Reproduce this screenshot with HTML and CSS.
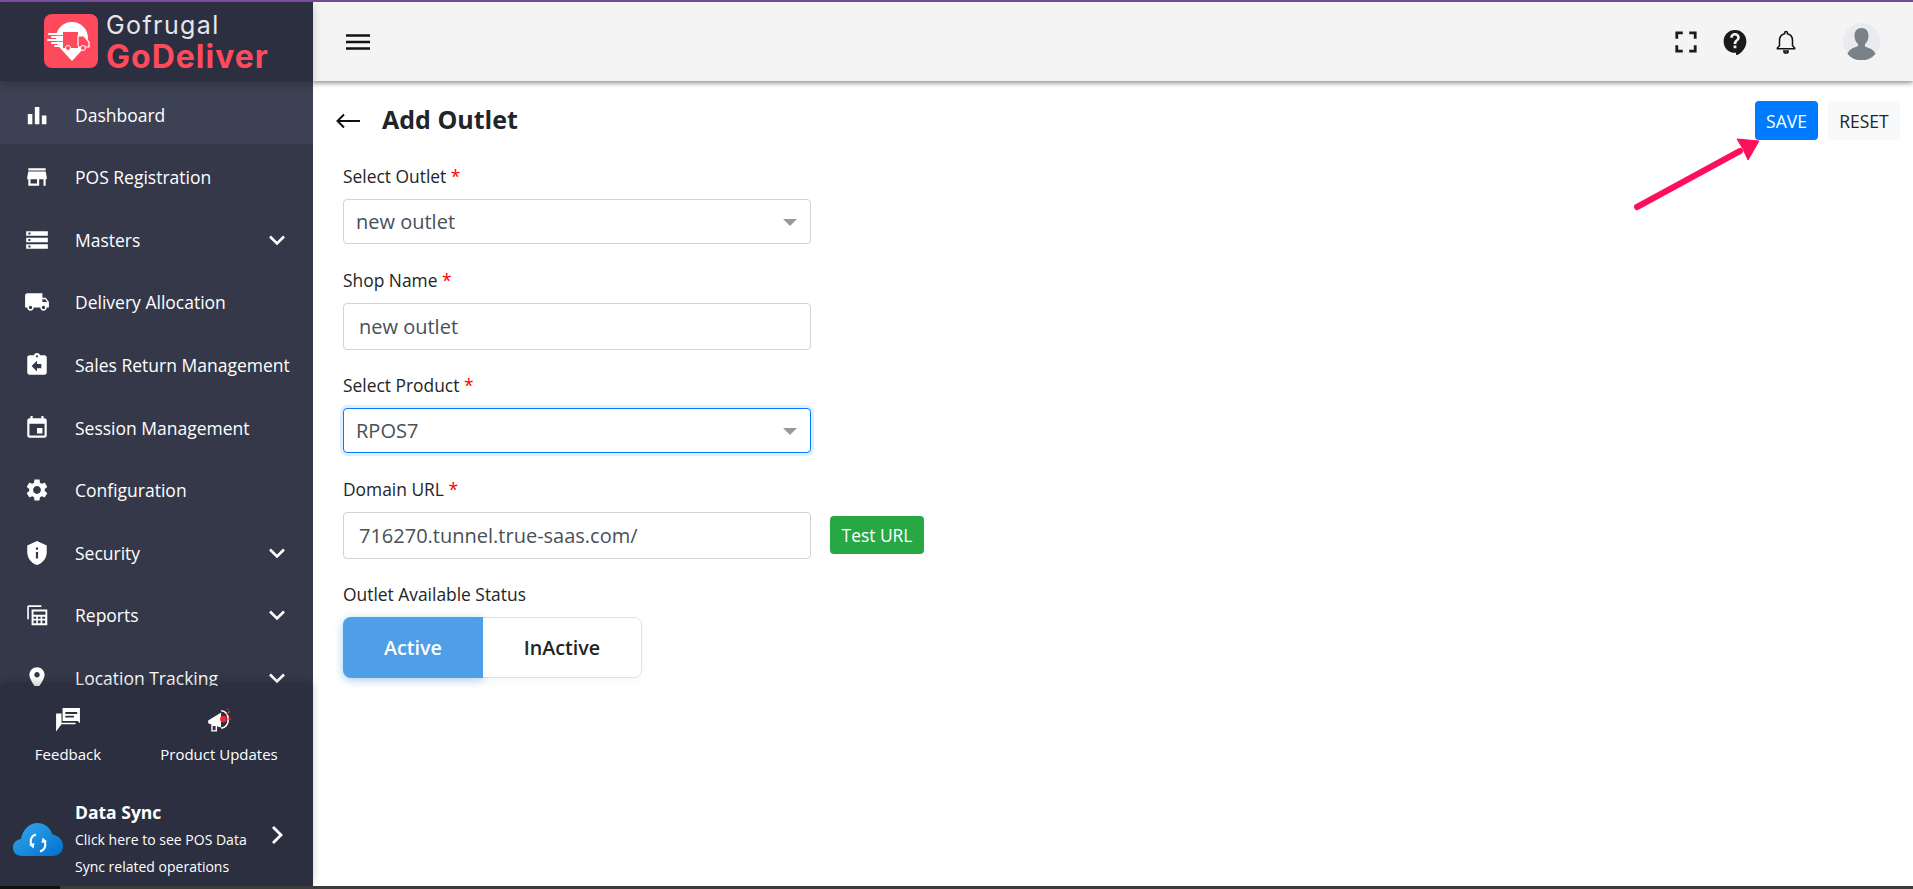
FILE: index.html
```html
<!DOCTYPE html>
<html lang="en">
<head>
<meta charset="utf-8">
<title>Add Outlet</title>
<link rel="stylesheet" href="styles.css">
</head>
<body>
<div class="app">
  <div class="topline"></div>
  <div class="shell">
    <aside class="sidebar">
      <div class="brand">
        <svg class="brand-mark" viewBox="0 0 54 54">
          <rect width="54" height="54" rx="8" fill="#ff4a5e"/>
          <path d="M28 8c9 0 16 7 16 16 0 5-2 8-5 11L28 47 17 35c-3-3-5-6-5-11 0-9 7-16 16-16z" fill="#fff"/>
          <path d="M5 20h14M8 23h11M4 26h15M8 29h11M11 32h8" stroke="#fff" stroke-width="2" stroke-linecap="round"/>
          <path d="M6 21.500h13M6 27.500h13" stroke="#ff4a5e" stroke-width=".8"/>
          <rect x="19" y="18" width="15" height="14" fill="#ff4a5e"/>
          <path d="M34 22h6l5 6v5H34z" fill="#ff4a5e" stroke="#fff" stroke-width="1.200"/>
          <path d="M19 33h15" stroke="#ff4a5e" stroke-width="2"/>
          <circle cx="24" cy="34" r="2.500" fill="#ff4a5e" stroke="#fff"/>
          <circle cx="39" cy="34" r="2.500" fill="#ff4a5e" stroke="#fff"/>
        </svg>
        <div class="brand-text">
          <div class="brand-top">Gofrugal</div>
          <div class="brand-name">GoDeliver</div>
        </div>
      </div>
      <nav class="menu">
        <a class="item active"><svg class="ico" viewBox="0 0 24 24"><path d="M3.500 11h4.200v9.500H3.500zM10 4.500h4.200v16H10zm6.500 8h4.200v8h-4.200z"/></svg><span>Dashboard</span></a>
        <a class="item"><svg class="ico" viewBox="0 0 24 24"><path d="M20 4H4v2h16V4zm1 10v-2l-1-5H4l-1 5v2h1v6h10v-6h4v6h2v-6h1zm-9 4H6v-4h6v4z"/></svg><span>POS Registration</span></a>
        <a class="item"><svg class="ico" viewBox="0 0 24 24"><path d="M2 20h20v-4H2v4zm2-3h2v2H4v-2zM2 4v4h20V4H2zm4 3H4V5h2v2zm-4 7h20v-4H2v4zm2-3h2v2H4v-2z"/></svg><span>Masters</span><svg class="chev" viewBox="0 0 24 24"><path d="M5 8.500l7 7 7-7"/></svg></a>
        <a class="item"><svg class="ico" viewBox="0 0 24 24"><path d="M20 8h-3V4H3c-1.100 0-2 .9-2 2v11h2c0 1.660 1.340 3 3 3s3-1.340 3-3h6c0 1.660 1.340 3 3 3s3-1.340 3-3h2v-5l-3-4zM6 18.500c-.83 0-1.500-.67-1.500-1.500s.67-1.500 1.500-1.500 1.500.67 1.500 1.500-.67 1.500-1.500 1.500zm13.500-9l1.960 2.500H17V9.500h2.500zm-1.500 9c-.83 0-1.500-.67-1.500-1.500s.67-1.500 1.500-1.500 1.500.67 1.500 1.500-.67 1.500-1.500 1.500z"/></svg><span>Delivery Allocation</span></a>
        <a class="item"><svg class="ico" viewBox="0 0 24 24"><path d="M19 3h-4.180C14.400 1.840 13.300 1 12 1c-1.300 0-2.400.84-2.820 2H5c-1.100 0-2 .9-2 2v14c0 1.100.9 2 2 2h14c1.100 0 2-.9 2-2V5c0-1.100-.9-2-2-2zm-7 0c.55 0 1 .45 1 1s-.45 1-1 1-1-.45-1-1 .45-1 1-1zm4 12h-4v3l-5-5 5-5v3h4v4z"/></svg><span>Sales Return Management</span></a>
        <a class="item"><svg class="ico" viewBox="0 0 24 24"><path d="M17 12h-5v5h5v-5zM16 1v2H8V1H6v2H5c-1.110 0-1.990.9-1.990 2L3 19c0 1.100.89 2 2 2h14c1.100 0 2-.9 2-2V5c0-1.100-.9-2-2-2h-1V1h-2zm3 18H5V8h14v11z"/></svg><span>Session Management</span></a>
        <a class="item"><svg class="ico" viewBox="0 0 24 24"><path d="M19.140 12.940c.04-.3.06-.61.06-.94 0-.32-.02-.64-.07-.94l2.030-1.580c.18-.14.23-.41.12-.61l-1.920-3.320c-.12-.22-.37-.29-.59-.22l-2.390.96c-.5-.38-1.030-.7-1.620-.94l-.36-2.540c-.04-.24-.24-.41-.48-.41h-3.840c-.24 0-.43.17-.47.41l-.36 2.540c-.59.24-1.130.57-1.620.94l-2.390-.96c-.22-.08-.47 0-.59.22L2.740 8.870c-.12.21-.08.47.12.61l2.030 1.580c-.05.3-.09.63-.09.94s.02.64.07.94l-2.030 1.580c-.18.14-.23.41-.12.61l1.920 3.320c.12.22.37.29.59.22l2.390-.96c.5.38 1.030.7 1.620.94l.36 2.540c.05.24.24.41.48.41h3.840c.24 0 .44-.17.47-.41l.36-2.540c.59-.24 1.130-.56 1.620-.94l2.390.96c.22.08.47 0 .59-.22l1.920-3.320c.12-.22.07-.47-.12-.61l-2.010-1.580zM12 15.600c-1.980 0-3.600-1.620-3.600-3.600s1.620-3.600 3.600-3.600 3.600 1.620 3.600 3.600-1.620 3.600-3.600 3.600z"/></svg><span>Configuration</span></a>
        <a class="item"><svg class="ico" viewBox="0 0 24 24"><path d="M12 1L3 5v6c0 5.550 3.840 10.740 9 12 5.160-1.260 9-6.450 9-12V5l-9-4zm1 16h-2v-6h2v6zm0-8h-2V7h2v2z"/></svg><span>Security</span><svg class="chev" viewBox="0 0 24 24"><path d="M5 8.500l7 7 7-7"/></svg></a>
        <a class="item"><svg class="ico" viewBox="0 0 24 24"><path fill-rule="evenodd" d="M3 4.500A1.500 1.500 0 0 1 4.500 3H16v1.500H4.500V16H3zM7 7h14.500v14.500H7zm1.800 1.800v3h11v-3zm0 4.700v2h2.500v-2zm4 0v2h2.500v-2zm4 0v2h2.700v-2zm-8 3.500v2.500h2.500V17zm4 0v2.500h2.500V17zm4 0v2.500h2.700V17z"/></svg><span>Reports</span><svg class="chev" viewBox="0 0 24 24"><path d="M5 8.500l7 7 7-7"/></svg></a>
        <a class="item"><svg class="ico" viewBox="0 0 24 24"><path d="M12 2C8.130 2 5 5.130 5 9c0 5.250 7 13 7 13s7-7.750 7-13c0-3.870-3.130-7-7-7zm0 9.500c-1.380 0-2.500-1.120-2.500-2.500s1.120-2.500 2.500-2.500 2.500 1.120 2.500 2.500-1.120 2.500-2.500 2.500z"/></svg><span>Location Tracking</span><svg class="chev" viewBox="0 0 24 24"><path d="M5 8.500l7 7 7-7"/></svg></a>
      </nav>
      <div class="side-foot">
        <div class="quick">
          <a class="quick-item feedback">
            <svg class="quick-ico" viewBox="0 0 24 24"><path fill-rule="evenodd" d="M7 1h16v14l-2-2H7zM9.500 4.500v2h11v-2zM9.500 8v1.800h8V8z M1 6h5v8.500h13V16H6l-5 6.500z"/></svg>
            <span>Feedback</span>
          </a>
          <a class="quick-item updates">
            <svg class="quick-ico" viewBox="0 0 24 24"><path d="M2 12.500 14 5v14l-5-1.500V22H6v-5.400L2 15z" fill="#fff"/><path d="M5.500 17h4v5h-4z" fill="#2b2f3f" stroke="#fff" stroke-width="1.300"/><path d="M14 3.500c4 0 6.500 3.500 6.500 8s-2.500 8-6.500 8" fill="#2b2f3f" stroke="#fff" stroke-width="1.500"/><circle cx="16" cy="11" r="3" fill="#f02633"/><path d="M19 7l3-3M20 11h3M20 3l.5-1.500" stroke="#f02633" stroke-width="1.200"/></svg>
            <span>Product Updates</span>
          </a>
        </div>
        <a class="sync">
          <svg class="cloud" viewBox="0 0 50 33">
            <defs><linearGradient id="cg" x1="0" y1="0" x2="1" y2="1"><stop offset="0" stop-color="#36a9ee"/><stop offset="1" stop-color="#0070cf"/></linearGradient></defs>
            <path d="M9 33C3 33 0 29 0 24.500 0 20 3.500 16.500 8 16 9.500 7 16 0 24.500 0 32 0 37.500 5 39.500 11.500 45.500 12.500 50 17 50 23c0 6-4.500 10-10.500 10z" fill="url(#cg)"/>
            <path d="M23 11.500c-4.500 1-7 6-4 11.500M27 28.500c4.500-1 7-6 4-11.500" fill="none" stroke="#fff" stroke-width="2"/>
            <path d="M16 21.500l4.500 4 1-5.500zM34 18.500l-4.500-4-1 5.500z" fill="#fff"/>
          </svg>
          <div class="sync-text">
            <strong>Data Sync</strong>
            <p>Click here to see POS Data</p>
            <p>Sync related operations</p>
          </div>
          <svg class="sync-chev" viewBox="0 0 24 24"><path d="M8 4l8 8-8 8"/></svg>
        </a>
      </div>
    </aside>
    <div class="content">
      <header class="topbar">
        <svg class="burger" viewBox="0 0 24 24"><path d="M0 5.500h24M0 12h24M0 18.500h24"/></svg>
        <div class="top-actions">
          <svg class="top-ico full" viewBox="0 0 24 24"><path d="M3.500 9V3.500H9M15 3.500h5.500V9M20.500 15v5.500H15M9 20.500H3.500V15"/></svg>
          <svg class="top-ico help" viewBox="0 0 24 24"><path fill-rule="evenodd" d="M12 1C6 1 1.500 5.500 1.500 11.500S6 22 12 22h1v2.500c5-2 9.500-7 9.500-13C22.500 5.500 18 1 12 1zm-1.300 16.800v-2.600h2.600v2.600zM13.300 13.800h-2.500c0-3.900 3.200-3.700 3.200-5.900 0-1-.9-1.800-2-1.800s-2 .8-2 1.900H7.600c0-2.500 2-4.200 4.400-4.200s4.400 1.700 4.400 4.100c0 3-3.100 3.200-3.100 5.900z"/></svg>
          <svg class="top-ico bell" viewBox="0 0 24 24"><path d="M12 2.300a1.300 1.300 0 0 1 1.300 1.300v.8c2.800.7 4.700 3.200 4.700 6.100v5l2 2v.8H4v-.8l2-2v-5c0-2.900 1.900-5.400 4.700-6.100v-.8A1.300 1.300 0 0 1 12 2.300zM10 20.200h4a2 2 0 0 1-4 0z" fill="none" stroke="#111" stroke-width="1.400"/></svg>
          <svg class="avatar" viewBox="0 0 37 37">
            <circle cx="18.500" cy="18.500" r="18.500" fill="#e9ebef"/>
            <path d="M18.500 5c4.500 0 7 3 7 7.500 0 4-1.500 7-3.500 8.500v2.500c5 2 9 3 10.500 7.500a18.500 18.500 0 0 1-28 0C6 26 10 25 15 23v-2c-2-1.500-3.500-4.500-3.500-8.500C11.500 8 14 5 18.500 5z" fill="#7a8188"/>
          </svg>
        </div>
      </header>
      <main class="page">
        <div class="page-head">
          <div class="title-wrap">
            <svg class="back" viewBox="0 0 24 16"><path d="M24 8H2M8 1.500 1.500 8 8 14.500"/></svg>
            <h1>Add Outlet</h1>
          </div>
          <div class="page-actions">
            <button class="btn btn-save">SAVE</button>
            <button class="btn btn-reset">RESET</button>
          </div>
        </div>
        <form class="form">
          <div class="group">
            <label>Select Outlet <em>*</em></label>
            <div class="select"><span>new outlet</span></div>
          </div>
          <div class="group">
            <label>Shop Name <em>*</em></label>
            <input class="input" value="new outlet">
          </div>
          <div class="group">
            <label>Select Product <em>*</em></label>
            <div class="select focused"><span>RPOS7</span></div>
          </div>
          <div class="group">
            <label>Domain URL <em>*</em></label>
            <div class="url-row">
              <input class="input" value="716270.tunnel.true-saas.com/">
              <button type="button" class="btn-test">Test URL</button>
            </div>
          </div>
          <div class="group">
            <label>Outlet Available Status</label>
            <div class="toggle">
              <button type="button" class="tg on">Active</button>
              <button type="button" class="tg">InActive</button>
            </div>
          </div>
        </form>
        <svg class="pointer" viewBox="0 0 134 80"><path d="M5 71 108 15" stroke="#ff0f5b" stroke-width="6" stroke-linecap="round" fill="none"/><path d="M127 5 105 3 111 13 116 24z" fill="#ff0f5b" stroke="#ff0f5b" stroke-width="1"/></svg>
      </main>
    </div>
  </div>
  <div class="bottomline"></div>
</div>
</body>
</html>
```
FILE: styles.css
```css
* { box-sizing: border-box; }
html, body { margin: 0; height: 100%; overflow: hidden; }
body { font-family: "Open Sans", sans-serif; color: #212529; background: #fff; }
.app { height: 100vh; display: flex; flex-direction: column; }
.topline { height: 2px; background: #7a4fa0; flex: none; }
.shell { flex: 1; display: flex; min-height: 0; }
.bottomline { height: 3px; flex: none; background: linear-gradient(to right, #111 60px, #3c3c3c 60px); }

.sidebar { width: 313px; flex: none; display: flex; flex-direction: column; background: #343849; color: #fff; min-height: 0; }
.brand { height: 79px; flex: none; display: flex; align-items: flex-start; gap: 8px; padding: 12px 0 0 44px; background: #2b2f3f; box-shadow: 0 4px 8px rgba(0,0,0,.2); position: relative; z-index: 2; }
.brand-mark { width: 54px; height: 54px; flex: none; }
.brand-text { font-family: Inter, sans-serif; margin-top: -4px; }
.brand-top { font-size: 25px; line-height: 31px; color: #e6e6e8; font-weight: 400; letter-spacing: 1.400px; }
.brand-name { font-size: 32px; line-height: 31px; color: #ff4a5e; font-weight: 700; letter-spacing: 1px; }

.menu { flex: 1; min-height: 0; overflow: hidden; }
.item { height: 62.600px; display: flex; align-items: center; padding: 4.500px 24px 0 24px; font-size: 17.500px; color: #fff; }
.item.active { background: #3c4153; }
.ico { width: 26px; height: 26px; fill: #fff; flex: none; margin-right: 25px; }
.item span { flex: 1; white-space: nowrap; }
.chev { width: 24px; height: 24px; flex: none; fill: none; stroke: #fff; stroke-width: 2.600; }

.side-foot { flex: none; height: 200px; background: #2b2f3f; box-shadow: 0 -4px 8px rgba(0,0,0,.2); position: relative; z-index: 2; display: flex; flex-direction: column; }
.quick { display: flex; height: 95px; padding-top: 21px; }
.quick-item { display: flex; flex-direction: column; align-items: center; font-size: 15px; color: #fff; }
.feedback { width: 136px; gap: 11px; }
.updates { width: 166px; gap: 11px; }
.quick-ico { width: 26px; height: 26px; fill: #fff; }
.sync { display: flex; align-items: center; padding: 17px 0 0 13px; }
.cloud { width: 50px; height: 33px; flex: none; margin-right: 12px; margin-top: 1px; }
.sync-text { flex: 1; font-size: 14px; line-height: 27px; }
.sync-text strong { display: block; font-size: 17.500px; font-weight: 700; line-height: 28px; }
.sync-text p { margin: 0; }
.sync-chev { width: 24px; height: 24px; flex: none; fill: none; stroke: #fff; stroke-width: 2.800; margin: -8px 24px 0 0; }

.content { flex: 1; min-width: 0; display: flex; flex-direction: column; }
.topbar { height: 79px; flex: none; display: flex; align-items: center; justify-content: space-between; padding: 0 33px 0 33px; background: #f4f4f5; box-shadow: 0 2px 5px rgba(0,0,0,.45); position: relative; z-index: 1; }
.burger { width: 24px; height: 24px; fill: none; stroke: #111; stroke-width: 2.400; }
.top-actions { display: flex; align-items: center; }
.top-ico { width: 26px; height: 26px; fill: #1a1a1a; margin-right: 24px; }
.full { fill: none; stroke: #1a1a1a; stroke-width: 2.600; margin-right: 23px; }
.help { margin-right: 25px; }
.bell { margin-right: 44px; }
.avatar { width: 37px; height: 37px; }

.page { flex: 1; position: relative; padding: 20px 13px 0 23px; }
.page-head { display: flex; justify-content: space-between; align-items: center; height: 39px; }
.title-wrap { display: flex; align-items: center; gap: 22px; }
.back { width: 24px; height: 16px; fill: none; stroke: #111; stroke-width: 2; }
h1 { margin: -2px 0 0; font-size: 25px; font-weight: 700; color: #212529; line-height: 39px; }
.page-actions { display: flex; gap: 10px; }
.btn { height: 39px; border: 0; border-radius: 4px; font-family: "Open Sans", sans-serif; font-size: 17.500px; padding: 0; }
.btn-save { width: 63px; background: #007bff; color: #fff; }
.btn-reset { width: 72px; background: #f8f9fa; color: #212529; }

.form { width: 468px; margin: 24px 0 0 7px; display: flex; flex-direction: column; gap: 23.500px; }
.group label { display: block; font-size: 17.400px; line-height: 24px; margin-bottom: 11px; color: #212529; }
.group em { color: #f00; font-style: normal; }
.select { height: 45px; border: 1px solid #ced4da; border-radius: 4px; background: #fff; display: flex; align-items: center; padding: 0 12px; font-size: 20px; color: #495057; position: relative; }
.select::after { content: ""; position: absolute; right: 13px; top: 19px; border-left: 7px solid transparent; border-right: 7px solid transparent; border-top: 7px solid #999; }
.select.focused { border-color: #007bff; box-shadow: 0 0 0 3px rgba(0,123,255,.12); }
.input { display: block; width: 468px; flex: none; height: 47px; border: 1px solid #ced4da; border-radius: 4px; background: #fff; padding: 0 15px; font-family: "Open Sans", sans-serif; font-size: 20px; color: #495057; outline: 0; }
.url-row { display: flex; align-items: center; gap: 19px; }
.btn-test { width: 94px; height: 38px; flex: none; border: 0; border-radius: 4px; background: #28a745; color: #fff; font-family: "Open Sans", sans-serif; font-size: 17.400px; padding: 0; }
.toggle { display: flex; width: 299px; height: 61px; border: 1px solid #dee2e6; border-radius: 8px; box-shadow: 0 4px 10px rgba(0,0,0,.03); }
.tg { border: 0; background: #fff; font-family: "Open Sans", sans-serif; font-size: 19.700px; font-weight: 600; color: #212529; padding: 0; flex: 1; border-radius: 0 8px 8px 0; }
.tg.on { flex: none; width: 140px; margin: -1px 0 -1px -1px; background: #4e9ee8; color: #fff; border-radius: 8px 0 0 8px; box-shadow: 0 2px 10px rgba(78,158,232,.45); }

.pointer { position: absolute; right: 147px; top: 55px; width: 134px; height: 80px; }
```
